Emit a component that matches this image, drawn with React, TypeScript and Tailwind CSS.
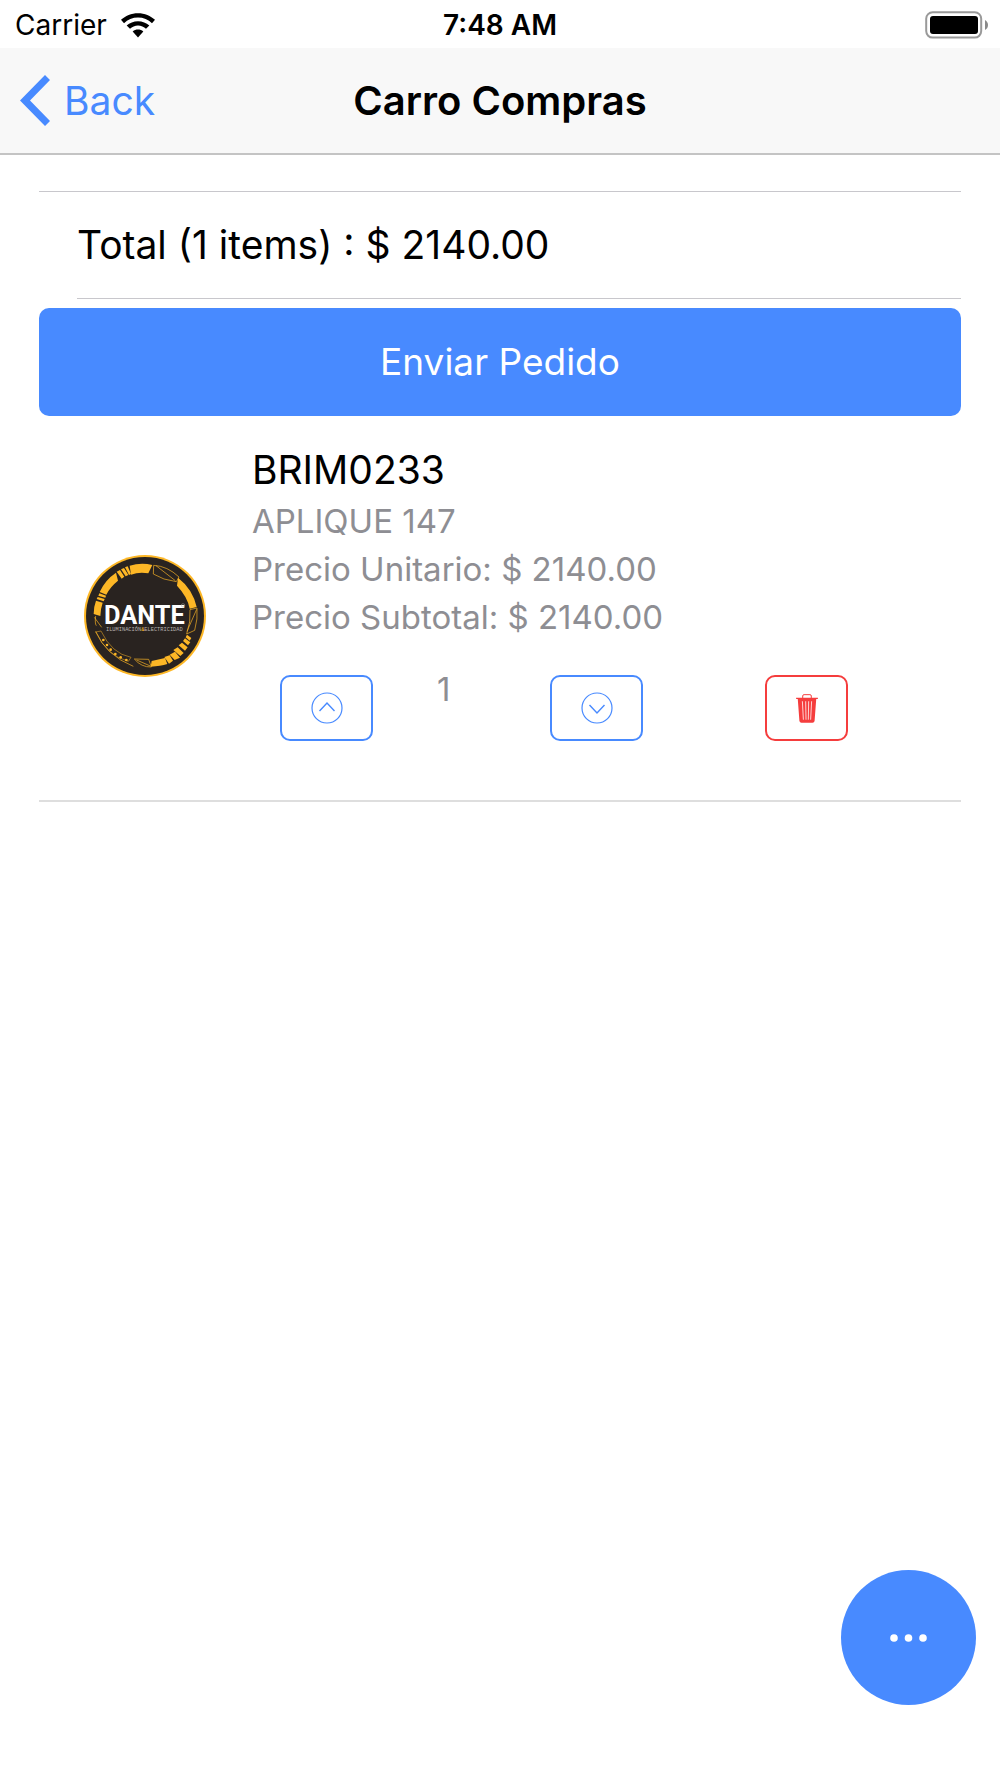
import { useState } from 'react';

const formatPrice = (value: number) => `$ ${value.toFixed(2)}`;

function WifiIcon() {
  return (
    <svg viewBox="0 0 102 74" className="h-[25px] w-[34px]" aria-hidden="true">
      <path d="M51 0C31 0 13 8 0 20l9 10C20 19 35 13 51 13s31 6 42 17l9-10C89 8 71 0 51 0Z" />
      <path d="M51 24c-13 0-25 5-34 13l10 10c6-6 15-10 24-10s18 4 24 10l10-10c-9-8-21-13-34-13Z" />
      <path d="M51 49c-6 0-11 2-16 6l16 18 16-18c-5-4-10-6-16-6Z" />
    </svg>
  );
}

function BatteryIcon() {
  return (
    <svg viewBox="0 0 64 28" className="h-7 w-16" aria-hidden="true">
      <rect x="1.2" y="1.2" width="55" height="25.4" rx="6.5" fill="none" stroke="#999" strokeWidth="2" />
      <rect x="5" y="5" width="48" height="18" rx="3" />
      <path d="M60 9c4 2 4 8 0 10Z" fill="#8a8a8a" />
    </svg>
  );
}

function BackIcon() {
  return (
    <svg viewBox="0 0 30 51" className="h-[51px] w-[30px]" fill="currentColor" aria-hidden="true">
      <path d="M25 0l5 5L10 25.500 30 46l-5 5L0 25.500Z" />
    </svg>
  );
}

function ArrowCircleIcon({ direction }: { direction: 'up' | 'down' }) {
  return (
    <svg viewBox="0 0 32 32" className="size-8" fill="none" stroke="currentColor" aria-hidden="true">
      <circle cx="16" cy="16" r="15" strokeWidth="1.2" />
      <path d={direction === 'up' ? 'M8.500 19 16 11l7.500 8' : 'M8.500 13 16 21l7.500-8'} strokeWidth="1.4" />
    </svg>
  );
}

function TrashIcon() {
  return (
    <svg viewBox="0 0 66 88" className="h-[29px] w-[22px]" aria-hidden="true">
      <path d="M20 13V6q0-4 4-4h18q4 0 4 4v7" fill="none" stroke="currentColor" strokeWidth="3" />
      <path d="M0 11h66v4H61l-5 67q-1 5-6 5H16q-5 0-6-5L5 15H0Z" fill="currentColor" />
      <path d="M19 22l3 56M29 22l1 56M38 22l-1 56M47 22l-3 56" stroke="#ffd5d5" strokeWidth="3" />
    </svg>
  );
}

function DanteLogo() {
  return (
    <svg viewBox="0 0 366 366" className="mt-11 size-[122px] shrink-0" role="img" aria-label="Dante">
      <circle cx="183" cy="183" r="183" fill="#fdb726" />
      <circle cx="183" cy="183" r="177" fill="#292320" />
      <g fill="#fdb726">
        <path d="M137 32Q171 22 205 30L193 55Q165 50 141 59Z" />
        <path d="M98 50l10-5 13 20-8 6ZM111 43l9-4 13 21-8 4ZM123 37l8-3 10 23-6 3Z" />
        <path d="M96 53l6 24Q78 96 67 119L47 111Q63 75 96 53Z" />
        <path d="M46 115l20 7-2 6-21-6ZM41 126l21 6-3 7-21-7ZM36 137l20 6q-6 17-7 40l-20-6q0-22 7-40Z" />
        <path d="M282 68q44 34 56 88l-21 5q-6-35-38-69Z" />
        <path d="M203 318l40-9 7 18q-20 7-50 8ZM241 306l16-5 10 16-12 9ZM257 299l16-9 15 18-16 7Z" />
        <path d="M268 285l13-8 18 17-10 9ZM284 271l10-8 17 14-8 10ZM297 258l6-8 16 12-7 9ZM305 247l4-8 13 10-5 8Z" />
      </g>
      <g fill="none" stroke="#fdb726" strokeWidth="2">
        <path d="M209 31q41 2 76 35l-8 14-37-8-32-15ZM216 32l58 45" />
        <path d="M318 164l21-5q3 32-7 67l-24 11q13-36 10-73ZM338 163l-29 66" />
        <path d="M35 229q32 73 113 105M151 312l43 1 8 23q-30 1-51-24ZM158 315l41 18" />
        <path d="M35 183q-3 22 2 29M31 187l22 30" />
        <path d="M51 228q32 68 90 79l-8 12Q67 301 35 231Z" strokeWidth="1.500" />
      </g>
      <g fill="#fdb726">
        <circle cx="58" cy="255" r="4" />
        <circle cx="69" cy="270" r="4" />
        <circle cx="80" cy="284" r="4" />
        <circle cx="94" cy="297" r="4" />
        <circle cx="110" cy="307" r="4" />
        <circle cx="127" cy="315" r="4" />
      </g>
      <text x="181" y="207" fontSize="76" fontWeight="700" textAnchor="middle" fill="#fff" fontFamily="Roboto, sans-serif">
        DANTE
      </text>
      <text x="181" y="229" fontSize="16" textAnchor="middle" fill="#b9b5b2" fontFamily="'Liberation Mono', monospace">
        ILUMINACIÓN<tspan fill="#fdb726">&amp;</tspan>ELECTRICIDAD
      </text>
      <circle cx="297" cy="151" r="5" fill="none" stroke="#aaa" strokeWidth="1.500" />
    </svg>
  );
}

function StatusBar() {
  return (
    <div className="grid h-12 grid-cols-3 items-center bg-white px-[15px] pt-0.5 text-[28px] leading-8">
      <div className="flex items-center gap-[14px]">
        <span>Carrier</span>
        <WifiIcon />
      </div>
      <span className="text-center font-semibold">7:48 AM</span>
      <div className="-mr-1 flex justify-end">
        <BatteryIcon />
      </div>
    </div>
  );
}

export default function App() {
  const [quantity, setQuantity] = useState(1);
  const [removed, setRemoved] = useState(false);
  const price = 2140;
  const total = removed ? 0 : price * quantity;

  return (
    <div className="min-h-screen bg-white font-[Inter,sans-serif] text-black">
      <StatusBar />

      <header className="grid h-[107px] grid-cols-[1fr_auto_1fr] items-center border-b-2 border-[#c4c4c4] bg-[#f8f8f8] px-5">
        <button type="button" className="flex items-center gap-[14px] justify-self-start text-[39px] leading-[48px] text-[#488aff]">
          <BackIcon />
          Back
        </button>
        <h1 className="text-[40px] leading-[48px] font-semibold">Carro Compras</h1>
      </header>

      <main className="px-[39px] pt-9">
        <div className="border-t border-[#c8c7cc] pl-[38px]">
          <p className="border-b border-[#c8c7cc] py-[29px] text-[39px] leading-[48px]">
            Total ({removed ? 0 : 1} items) : {formatPrice(total)}
          </p>
        </div>

        <button type="button" className="mt-[9px] h-[108px] w-full rounded-[10px] bg-[#488aff] text-[37px] leading-[48px] text-white">
          Enviar Pedido
        </button>

        {!removed && (
          <section className="flex items-center gap-[46px] border-b-2 border-[#dedede] pt-[30px] pr-[26px] pb-[59px] pl-[45px]">
            <DanteLogo />
            <div className="min-w-0 flex-1">
              <h2 className="text-[39px] leading-[48px]">BRIM0233</h2>
              <div className="mt-[3px] text-[33px] leading-[48px] text-[#8e8e93]">
                <p>APLIQUE 147</p>
                <p>Precio Unitario: {formatPrice(price)}</p>
                <p>Precio Subtotal: {formatPrice(total)}</p>
              </div>
              <div className="mt-[34px] grid grid-cols-[29fr_25fr_43fr_34fr] pl-7">
                <button
                  type="button"
                  aria-label="Aumentar cantidad"
                  onClick={() => setQuantity(quantity + 1)}
                  className="flex h-[66px] w-[93px] items-center justify-center rounded-[10px] border-2 border-[#488aff] text-[#488aff]"
                >
                  <ArrowCircleIcon direction="up" />
                </button>
                <span className="pl-3 text-[33px] leading-7 text-[#8e8e93]">{quantity}</span>
                <button
                  type="button"
                  aria-label="Disminuir cantidad"
                  onClick={() => setQuantity(Math.max(1, quantity - 1))}
                  className="flex h-[66px] w-[93px] items-center justify-center rounded-[10px] border-2 border-[#488aff] text-[#488aff]"
                >
                  <ArrowCircleIcon direction="down" />
                </button>
                <button
                  type="button"
                  aria-label="Eliminar"
                  onClick={() => setRemoved(true)}
                  className="flex h-[66px] w-[83px] items-center justify-center rounded-[10px] border-2 border-[#f53d3d] text-[#f53d3d]"
                >
                  <TrashIcon />
                </button>
              </div>
            </div>
          </section>
        )}
      </main>

      <button
        type="button"
        aria-label="Más opciones"
        className="fixed right-6 bottom-[73px] flex size-[135px] items-center justify-center rounded-full bg-[#488aff] text-white"
      >
        <svg viewBox="0 0 38 8" className="h-2 w-[38px]" fill="currentColor" aria-hidden="true">
          <circle cx="4" cy="4" r="3.800" />
          <circle cx="18.500" cy="4" r="3.800" />
          <circle cx="33" cy="4" r="3.800" />
        </svg>
      </button>
    </div>
  );
}
